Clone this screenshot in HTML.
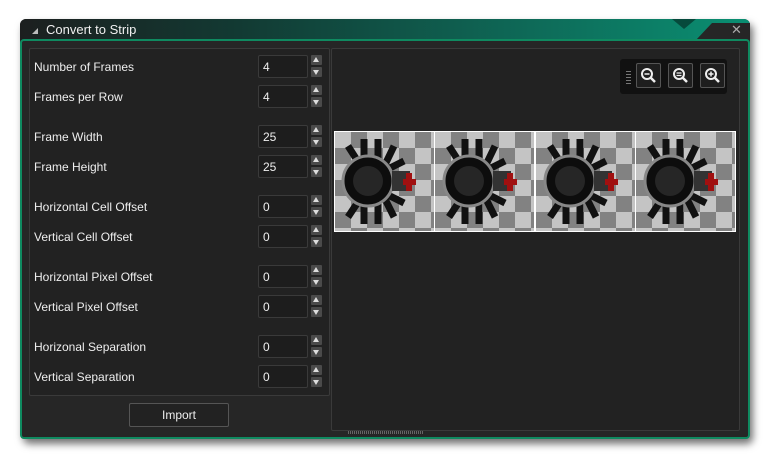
<!DOCTYPE html><html><head><style>
body{margin:0;width:770px;height:459px;background:#fff;position:relative;overflow:hidden;font-family:"Liberation Sans",sans-serif;font-size:12px;color:#e8e8e8}
.win{position:absolute;left:20px;top:19px;width:730px;height:420px;background:#262626;border-radius:6px;box-shadow:3px 5px 8px rgba(0,0,0,.55)}
.title{position:absolute;left:0;top:0;width:730px;height:21px;border-radius:6px 6px 0 0;background:linear-gradient(90deg,#1c1f1f 0%,#123a33 30%,#0e6a58 70%,#0a8f72 100%)}
.title span{position:absolute;left:26px;top:3px;font-size:13px;color:#f0f0f0}
.tri{position:absolute;left:12px;top:9px;width:0;height:0;border-left:6px solid transparent;border-bottom:6px solid #bbb}
.body{position:absolute;left:0;top:20px;width:726px;height:396px;border:2px solid #0f8a60;border-radius:4px;background:#262626}
.lp{position:absolute;left:9px;top:29px;width:299px;height:346px;background:#222;border:1px solid #3a3a3a;border-radius:2px}
.rp{position:absolute;left:311px;top:29px;width:407px;height:381px;background:#222;border:1px solid #3a3a3a;border-radius:2px}
.lab{position:absolute;left:4px;font-size:12px;color:#eee}
.inp{position:absolute;left:228px;width:50px;height:23px;background:#1d1d1d;border:1px solid #3a3a3a;border-radius:2px;box-sizing:border-box;padding:4px 4px;color:#eee}
.sp{position:absolute;left:281px;width:11px;height:10px;background:#4a4a4a;border-radius:1px}
.sp:after{content:"";position:absolute;left:2px;width:0;height:0;border-left:3.5px solid transparent;border-right:3.5px solid transparent}
.up:after{top:2px;border-bottom:5px solid #ddd}
.dn:after{top:3px;border-top:5px solid #ddd}
.btn{position:absolute;left:109px;top:384px;width:98px;height:22px;border:1px solid #555;border-radius:2px;background:#222;text-align:center;line-height:22px;color:#eee}
.zb{position:absolute;width:23px;height:23px;border:1px solid #555;border-radius:2px;background:#1e1e1e}
.strip{position:absolute;left:314px;top:112px;width:402px;height:101px;background:#fff}
.fr{position:absolute;top:1px;width:99px;height:99px;background-color:#c4c4c4;background-image:linear-gradient(45deg,#828282 25%,transparent 25%,transparent 75%,#828282 75%),linear-gradient(45deg,#828282 25%,transparent 25%,transparent 75%,#828282 75%);background-size:32px 32px;background-position:0 0,16px 16px}
</style></head><body>
<div class="win">
<div class="title"><div class="tri"></div><span>Convert to Strip</span></div>
<div style="position:absolute;left:652px;top:0;width:0;height:0;border-left:12px solid transparent;border-right:12px solid transparent;border-top:10px solid #064a3c"></div>
<div style="position:absolute;left:676px;top:4px;width:54px;height:17px;background:#262626;clip-path:polygon(16px 0,100% 0,100% 100%,0 100%)"></div>
<div style="position:absolute;left:711px;top:3px;color:#aaa;font-size:13px">✕</div>
<div class="body"></div>
<div class="lp">
<div class="lab" style="top:11px">Number of Frames</div><div class="inp" style="top:6px">4</div><div class="sp up" style="top:6px"></div><div class="sp dn" style="top:18px"></div>
<div class="lab" style="top:41px">Frames per Row</div><div class="inp" style="top:36px">4</div><div class="sp up" style="top:36px"></div><div class="sp dn" style="top:48px"></div>
<div class="lab" style="top:81px">Frame Width</div><div class="inp" style="top:76px">25</div><div class="sp up" style="top:76px"></div><div class="sp dn" style="top:88px"></div>
<div class="lab" style="top:111px">Frame Height</div><div class="inp" style="top:106px">25</div><div class="sp up" style="top:106px"></div><div class="sp dn" style="top:118px"></div>
<div class="lab" style="top:151px">Horizontal Cell Offset</div><div class="inp" style="top:146px">0</div><div class="sp up" style="top:146px"></div><div class="sp dn" style="top:158px"></div>
<div class="lab" style="top:181px">Vertical Cell Offset</div><div class="inp" style="top:176px">0</div><div class="sp up" style="top:176px"></div><div class="sp dn" style="top:188px"></div>
<div class="lab" style="top:221px">Horizontal Pixel Offset</div><div class="inp" style="top:216px">0</div><div class="sp up" style="top:216px"></div><div class="sp dn" style="top:228px"></div>
<div class="lab" style="top:251px">Vertical Pixel Offset</div><div class="inp" style="top:246px">0</div><div class="sp up" style="top:246px"></div><div class="sp dn" style="top:258px"></div>
<div class="lab" style="top:291px">Horizonal Separation</div><div class="inp" style="top:286px">0</div><div class="sp up" style="top:286px"></div><div class="sp dn" style="top:298px"></div>
<div class="lab" style="top:321px">Vertical Separation</div><div class="inp" style="top:316px">0</div><div class="sp up" style="top:316px"></div><div class="sp dn" style="top:328px"></div>
</div>
<div class="btn">Import</div>
<div class="rp">
<div style="position:absolute;left:288px;top:10px;width:107px;height:35px;background:#111;border-radius:3px"></div>
</div>
<div style="position:absolute;left:606px;top:52px;width:5px;height:13px;background:repeating-linear-gradient(#777 0 1px,transparent 1px 3px)"></div>
<div class="zb" style="left:616px;top:44px"><svg width="23" height="23"><circle cx="10" cy="10" r="5" stroke="#eee" stroke-width="2" fill="none"/><path d="M13.5 13.5L18 18" stroke="#eee" stroke-width="2.5"/><path d="M7.5 10h5" stroke="#eee" stroke-width="1.5"/></svg></div>
<div class="zb" style="left:648px;top:44px"><svg width="23" height="23"><circle cx="10" cy="10" r="5" stroke="#eee" stroke-width="2" fill="none"/><path d="M13.5 13.5L18 18" stroke="#eee" stroke-width="2.5"/><path d="M7.5 9h5M7.5 11.5h5" stroke="#eee" stroke-width="1.2"/></svg></div>
<div class="zb" style="left:680px;top:44px"><svg width="23" height="23"><circle cx="10" cy="10" r="5" stroke="#eee" stroke-width="2" fill="none"/><path d="M13.5 13.5L18 18" stroke="#eee" stroke-width="2.5"/><path d="M7.5 10h5M10 7.5v5" stroke="#eee" stroke-width="1.5"/></svg></div>
<div class="strip">
<div class="fr" style="left:1px"></div><div class="fr" style="left:101px"></div><div class="fr" style="left:202px"></div><div class="fr" style="left:302px"></div>
<svg width="402" height="101" style="position:absolute;left:0;top:0">
<g id="g"><g fill="none" stroke="#111" stroke-width="7"><path d="M14 15L30 40M30 8V30M44 8V30M60 15L48 40M14 86L30 62M30 93V72M44 93V72M60 86L48 62M50 40L70 30M50 62L70 72"/></g>
<circle cx="34" cy="50" r="25" fill="#0d0d0d" stroke="#888" stroke-width="3"/><circle cx="34" cy="50" r="15" fill="#262626"/>
<path d="M58 40h18v20h-18z" fill="#333"/><path d="M72 42h6v6h4v6h-4v6h-6v-6h-3v-6h3z" fill="#a01010"/></g>
<use href="#g" x="101"/><use href="#g" x="202"/><use href="#g" x="302"/>
</svg></div>
<div style="position:absolute;left:328px;top:412px;width:76px;height:3px;background:repeating-linear-gradient(90deg,#666 0 1px,transparent 1px 2px)"></div>
</div>
</body></html>
